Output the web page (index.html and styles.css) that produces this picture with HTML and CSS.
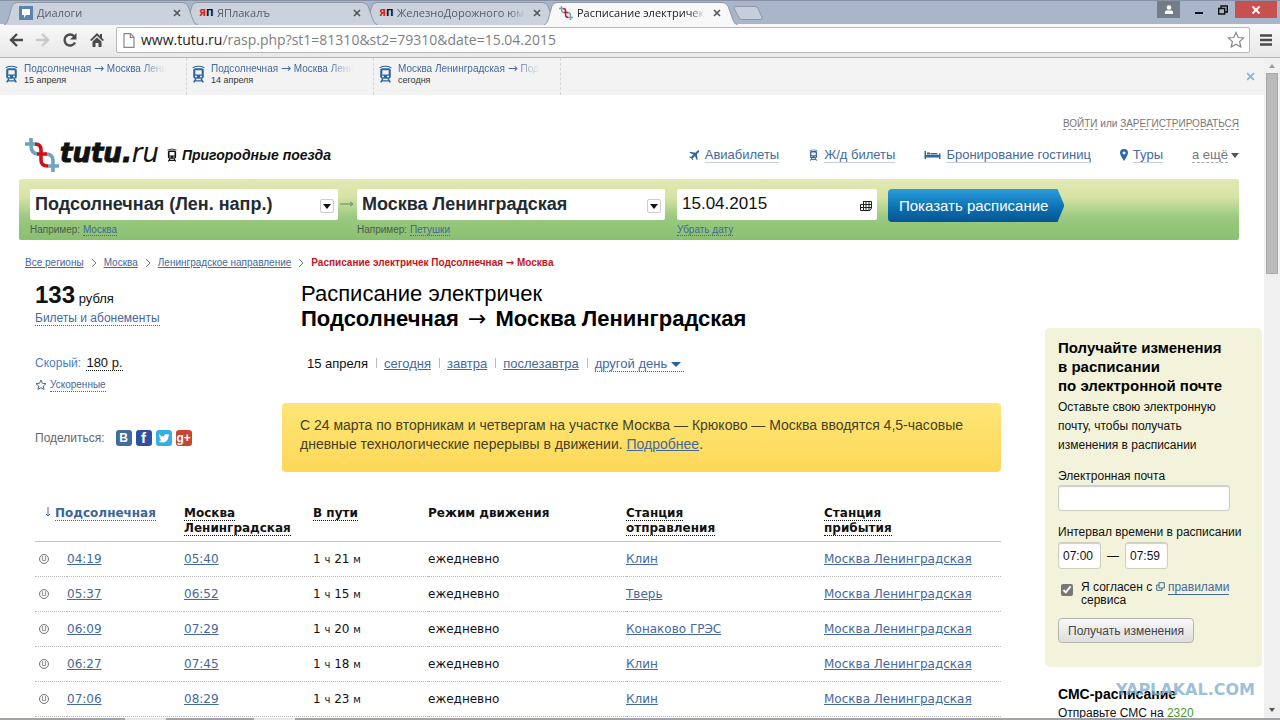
FILE: index.html
```html
<!DOCTYPE html>
<html lang="ru">
<head>
<meta charset="utf-8">
<title>Расписание электричек Подсолнечная → Москва</title>
<link rel="stylesheet" href="styles.css">
</head>
<body>
<svg class="defs" aria-hidden="true">
  <symbol id="train" viewBox="0 0 12 17"><path d="M.5 2.500Q6 0 11.500 2.500" fill="none" stroke="currentColor"/><path d="M3 3h6q2 0 2 2v6q0 2-2 2H3q-2 0-2-2V5q0-2 2-2zm0 2v4h6V5zm-.2 5.200v1.300h1.700v-1.300zm4.700 0v1.300h1.700v-1.300z" fill="currentColor" fill-rule="evenodd"/><path d="M3.500 13 1.500 16.500M8.500 13l2 3.500M2.500 15h7" stroke="currentColor" stroke-width="1.400" fill="none"/></symbol>
  <symbol id="close" viewBox="0 0 8 8"><path d="m1 1 6 6M7 1 1 7" stroke="currentColor" stroke-width="1.600"/></symbol>
  <symbol id="helix" viewBox="0 0 34 34"><g fill="none" stroke-width="3.600"><path d="M0 6h10M6 0v7q0 9 7 9M21 16q7 0 7 7v11M23 28h11" stroke="#6fa3c0"/><path d="M10 6q6 0 6 6v10q0 6 7 6M12 16h10" stroke="#d0101c"/></g></symbol>
  <symbol id="tab" viewBox="0 0 194 24" preserveAspectRatio="none"><path d="M0 24Q3 23 4 19L8 5Q9 1.500 13 1.500H178Q182 1.500 184 5L189 19Q190 23 194 24" stroke="#8e98a8"/></symbol>
  <symbol id="chev" viewBox="0 0 6 10"><path d="m1 1 4 4-4 4" fill="none" stroke="#777"/></symbol>
  <symbol id="warn" viewBox="0 0 12 12"><circle cx="6" cy="6" r="4.500" fill="#f6f6f6" stroke="#777"/><path d="M4.500 3v4.500h3V3" fill="none" stroke="#999"/></symbol>
</svg>
<div class="browser">
  <div class="tabstrip">
    <div class="tab"><svg class="shape"><use href="#tab"/></svg>
      <svg class="fav" viewBox="0 0 14 14"><path fill="#5b82ad" d="M0 0h14v14H0z"/><path fill="#fff" d="M3 3h8v6H7l-2 3V9H3z"/></svg>
      <span class="tab-title">Диалоги</span><button class="tab-close" aria-label="Закрыть"><svg><use href="#close"/></svg></button></div>
    <div class="tab"><svg class="shape"><use href="#tab"/></svg>
      <span class="yap"><b>Я</b>П</span><span class="tab-title">ЯПлакалъ</span><button class="tab-close" aria-label="Закрыть"><svg><use href="#close"/></svg></button></div>
    <div class="tab"><svg class="shape"><use href="#tab"/></svg>
      <span class="yap"><b>Я</b>П</span><span class="tab-title">ЖелезноДорожного юмора</span><button class="tab-close" aria-label="Закрыть"><svg><use href="#close"/></svg></button></div>
    <div class="tab active"><svg class="shape"><use href="#tab"/></svg>
      <svg class="fav"><use href="#helix"/></svg><span class="tab-title">Расписание электричек Подсолнечная</span><button class="tab-close" aria-label="Закрыть"><svg><use href="#close"/></svg></button></div>
    <button class="newtab" aria-label="Новая вкладка"><svg viewBox="0 0 30 14"><path d="M3 .5h19q2 0 3 2l4 9q0 2-2 2H9q-2 0-3-2l-5-9q0-2 2-2z" fill="#c6cedb" stroke="#8e98a8"/></svg></button>
    <div class="window-buttons">
      <button class="user" aria-label="Профиль"><svg viewBox="0 0 10 10"><circle cx="5" cy="2.500" r="2.300" fill="#fff"/><path fill="#fff" d="M1 9V7q0-1.500 1.500-1.500h5Q9 5.500 9 7v2z"/></svg></button>
      <button aria-label="Свернуть"><svg viewBox="0 0 10 10"><path d="M1 8h8" stroke="#111" stroke-width="2"/></svg></button>
      <button aria-label="Восстановить"><svg viewBox="0 0 10 10"><path d="M.7 3.500h6v5.500h-6zM3 3V1h6.300v6H7" fill="none" stroke="#111" stroke-width="1.400"/></svg></button>
      <button class="quit" aria-label="Закрыть окно"><svg viewBox="0 0 10 10"><path d="m1.500 1.500 7 7m0-7-7 7" stroke="#fff" stroke-width="1.800"/></svg></button>
    </div>
  </div>
  <div class="toolbar">
    <button aria-label="Назад"><svg viewBox="0 0 16 16"><path d="M15 8H3m6-6L3 8l6 6" fill="none" stroke="#4a4a4a" stroke-width="2.400"/></svg></button>
    <button aria-label="Вперёд"><svg viewBox="0 0 16 16"><path d="M1 8h12M7 2l6 6-6 6" fill="none" stroke="#c8c8c8" stroke-width="2.400"/></svg></button>
    <button aria-label="Обновить"><svg viewBox="0 0 16 16"><path d="M13 10.500A5.500 5.500 0 1 1 12 4.200" fill="none" stroke="#4a4a4a" stroke-width="2.400"/><path d="M14.500 1v6.500H8z" fill="#4a4a4a"/></svg></button>
    <button aria-label="Домой"><svg viewBox="0 0 16 16"><path d="M8 1 1 8l1.500 1L8 3.800 13.500 9 15 8l-2-2V2h-2v2zM3.500 9.500 8 5.500l4.500 4V15H9.500v-4h-3v4h-3z" fill="#4a4a4a"/></svg></button>
    <div class="omnibox">
      <svg class="doc" viewBox="0 0 12 15"><path d="M1 .7h6.500L11 4.300v10H1zM7.300 1v3.500H11" fill="#fff" stroke="#888" stroke-width="1.200"/></svg>
      <span class="url"><b>www.tutu.ru</b>/rasp.php?st1=81310&amp;st2=79310&amp;date=15.04.2015</span>
      <svg class="star" viewBox="0 0 18 18"><path d="m9 1.500 2.200 5 5.400.5-4 3.600 1.200 5.400L9 13.200 4.200 16l1.200-5.400-4-3.600 5.400-.5z" fill="#fff" stroke="#888" stroke-width="1.200"/></svg>
    </div>
    <button aria-label="Меню"><svg viewBox="0 0 16 16"><path d="M2 3.500h12M2 8h12M2 12.500h12" stroke="#4a4a4a" stroke-width="2.600"/></svg></button>
  </div>

  <div class="view">
    <div class="page">
      <div class="recent">
        <a class="recent-item" href="#"><svg><use href="#train"/></svg><span><span class="route">Подсолнечная <i>→</i> Москва Ленинградская</span><small>15 апреля</small></span></a>
        <a class="recent-item" href="#"><svg><use href="#train"/></svg><span><span class="route">Подсолнечная <i>→</i> Москва Ленинградская</span><small>14 апреля</small></span></a>
        <a class="recent-item" href="#"><svg><use href="#train"/></svg><span><span class="route">Москва Ленинградская <i>→</i> Подсолнечная</span><small>сегодня</small></span></a>
        <button class="recent-close" aria-label="Закрыть"><svg><use href="#close"/></svg></button>
      </div>

      <header>
        <div class="login"><a href="#">ВОЙТИ</a> или <a href="#">ЗАРЕГИСТРИРОВАТЬСЯ</a></div>
        <div class="head-row">
          <a class="logo" href="#"><svg><use href="#helix"/></svg><span><b>tutu.</b>ru</span></a>
          <div class="slogan"><svg><use href="#train"/></svg>Пригородные поезда</div>
          <nav>
            <a href="#"><svg viewBox="0 0 12 12"><path fill="currentColor" d="M11 1q1 1-2.500 4l1 6-1 .5L6.500 7.200 4 9.500l.3 1.700-.8.600-1-2.300L.2 8.500l.6-.8 1.700.2L4.800 5.500.5 3.500 1 2.500l6 1Q10 0 11 1z"/></svg><span>Авиабилеты</span></a>
            <a href="#"><svg><use href="#train"/></svg><span>Ж/д билеты</span></a>
            <a href="#"><svg class="bed" viewBox="0 0 16 10"><path fill="currentColor" d="M0 1h1.500v4h13V3.500H16V9h-1.500V7.500h-13V9H0zM2.500 2.500h3v2h-3zM6 3h6l2 1.500H6z"/></svg><span>Бронирование гостиниц</span></a>
            <a href="#"><svg class="pin" viewBox="0 0 8 12"><path fill="currentColor" fill-rule="evenodd" d="M4 0Q8 .2 8 4 8 6 4 12 0 6 0 4 0 .2 4 0zm0 2.500a1.500 1.500 0 1 0 .1 0z"/></svg><span>Туры</span></a>
            <a class="more" href="#"><span>а ещё</span><i class="caret"></i></a>
          </nav>
        </div>
      </header>

      <form class="search">
        <div class="station"><div class="field"><input type="text" aria-label="Откуда" value="Подсолнечная (Лен. напр.)"><button type="button" aria-label="Список"><i class="caret"></i></button></div><p>Например: <a href="#">Москва</a></p></div>
        <svg class="arrow" viewBox="0 0 14 8"><path d="M0 4h12M10 2l3 2-3 2" fill="none" stroke="#64896a"/></svg>
        <div class="station"><div class="field"><input type="text" aria-label="Куда" value="Москва Ленинградская"><button type="button" aria-label="Список"><i class="caret"></i></button></div><p>Например: <a href="#">Петушки</a></p></div>
        <div class="date"><div class="field"><input type="text" aria-label="Дата" value="15.04.2015"><svg viewBox="0 0 12 10"><path d="M3 .5h8.500v6.500L10 9.500H.5V3.500h11M.5 6.500h11M3.500.5v9M6 .5v9M9 .5v9" fill="none" stroke="#222"/></svg></div><p><a href="#">Убрать дату</a></p></div>
        <button class="submit" type="button">Показать расписание</button>
      </form>

      <div class="crumbs">
        <a href="#">Все регионы</a><svg><use href="#chev"/></svg><a href="#">Москва</a><svg><use href="#chev"/></svg><a href="#">Ленинградское направление</a><svg><use href="#chev"/></svg><strong>Расписание электричек Подсолнечная <i>→</i> Москва</strong>
      </div>

      <div class="columns">
        <main>
          <div class="intro">
            <aside class="price">
              <div class="cost"><b>133</b> рубля</div>
              <a class="dotted" href="#">Билеты и абонементы</a>
              <div class="fast">Скорый: <span>180 р.</span></div>
              <div class="quick"><svg viewBox="0 0 12 12"><path d="m6 1 1.400 3.300 3.600.3-2.700 2.400.8 3.500L6 8.700l-3.100 1.800.8-3.500L1 4.600l3.600-.3z" fill="none" stroke="#3a72ae"/></svg><a class="dotted" href="#">Ускоренные</a></div>
              <div class="share">Поделиться:
                <a class="vk" href="#" aria-label="ВКонтакте">B</a><a class="fb" href="#" aria-label="Facebook">f</a><a class="tw" href="#" aria-label="Twitter"><svg viewBox="0 0 12 12"><path fill="#fff" d="M1 2q2 2.500 5 2.500Q6 2 8 2q1 0 1.500.5L11 2l-.8 1.500L11.500 3 10.500 4.500Q10 10 5 10.500 2 10.500.5 9q2 0 3-1Q2 7.500 1.500 6h1Q1 5 1 4l1 .2Q.5 3 1 2z"/></svg></a><a class="gp" href="#" aria-label="Google+">g+</a>
              </div>
            </aside>
            <section class="title">
              <h1>Расписание электричек<br><b>Подсолнечная <i>→</i> Москва Ленинградская</b></h1>
              <div class="days"><span>15 апреля</span><a href="#">сегодня</a><a href="#">завтра</a><a href="#">послезавтра</a><a class="other" href="#"><span>другой день <i class="caret"></i></span></a></div>
              <div class="alert">С 24 марта по вторникам и четвергам на участке Москва — Крюково — Москва вводятся 4,5-часовые дневные технологические перерывы в движении. <a href="#">Подробнее</a>.</div>
            </section>
          </div>
          <table>
            <colgroup><col class="c-ico"><col class="c-dep"><col class="c-arr"><col class="c-dur"><col class="c-st"><col class="c-st"><col></colgroup>
            <thead><tr><th class="sorted" colspan="2"><svg viewBox="0 0 6 10"><path d="M3 0v9M1 7l2 2 2-2" fill="none" stroke="#3a72ae"/></svg><span>Подсолнечная</span></th><th><span>Москва Ленинградская</span></th><th><span>В пути</span></th><th>Режим движения</th><th><span>Станция<br>отправления</span></th><th><span>Станция<br>прибытия</span></th></tr></thead>
            <tbody>
              <tr><td><svg><use href="#warn"/></svg></td><td><a href="#">04:19</a></td><td><a href="#">05:40</a></td><td>1 <small>ч</small> 21 <small>м</small></td><td>ежедневно</td><td><a href="#">Клин</a></td><td><a href="#">Москва Ленинградская</a></td></tr>
              <tr><td><svg><use href="#warn"/></svg></td><td><a href="#">05:37</a></td><td><a href="#">06:52</a></td><td>1 <small>ч</small> 15 <small>м</small></td><td>ежедневно</td><td><a href="#">Тверь</a></td><td><a href="#">Москва Ленинградская</a></td></tr>
              <tr><td><svg><use href="#warn"/></svg></td><td><a href="#">06:09</a></td><td><a href="#">07:29</a></td><td>1 <small>ч</small> 20 <small>м</small></td><td>ежедневно</td><td><a href="#">Конаково ГРЭС</a></td><td><a href="#">Москва Ленинградская</a></td></tr>
              <tr><td><svg><use href="#warn"/></svg></td><td><a href="#">06:27</a></td><td><a href="#">07:45</a></td><td>1 <small>ч</small> 18 <small>м</small></td><td>ежедневно</td><td><a href="#">Клин</a></td><td><a href="#">Москва Ленинградская</a></td></tr>
              <tr><td><svg><use href="#warn"/></svg></td><td><a href="#">07:06</a></td><td><a href="#">08:29</a></td><td>1 <small>ч</small> 23 <small>м</small></td><td>ежедневно</td><td><a href="#">Клин</a></td><td><a href="#">Москва Ленинградская</a></td></tr>
            </tbody>
          </table>
        </main>
        <div class="side">
          <form class="subscribe">
            <h2>Получайте изменения<br>в расписании<br>по электронной почте</h2>
            <p>Оставьте свою электронную<br>почту, чтобы получать<br>изменения в расписании</p>
            <label for="email">Электронная почта</label>
            <input id="email" class="email" type="text">
            <label for="from">Интервал времени в расписании</label>
            <div class="interval"><input id="from" type="text" value="07:00">—<input type="text" aria-label="До" value="07:59"></div>
            <div class="agree"><input id="agree" type="checkbox" checked><label for="agree">Я согласен с <svg viewBox="0 0 9 9"><path d="M3 .7h5.300V6H3zM3 3H.7v5.300H6V6" fill="none" stroke="#3f6a9c"/></svg> <a href="#">правилами</a> сервиса</label></div>
            <button type="button">Получать изменения</button>
          </form>
          <div class="sms"><h2>СМС-расписание</h2><p>Отправьте СМС на <em>2320</em></p></div>
        </div>
      </div>
      <div class="mark">YAPLAKAL.COM</div>
    </div>
    <div class="scrollbar"><i class="up"></i><div class="thumb"></div><i class="down"></i></div>
  </div>
  <div class="taskbar"><i></i><i></i></div>
</div>
</body>
</html>
```

FILE: styles.css
```css
* { box-sizing: border-box; }
body { margin: 0; font: 12px/16px "Liberation Sans", Arial, sans-serif; color: #111; background: #fff; }
h1, h2, p { margin: 0; font-weight: normal; }
button { margin: 0; padding: 0; border: 0; background: none; font: inherit; color: inherit; }
input { font: inherit; color: inherit; margin: 0; }
a { color: #45699c; }
svg { display: block; flex: none; }
.defs { position: absolute; width: 0; height: 0; }
.caret { display: inline-block; border: 4px solid transparent; border-top: 5px solid currentColor; border-bottom: 0; }

.browser { display: flex; flex-direction: column; height: 100vh; overflow: hidden; }

/* Tabs */
.tabstrip { display: flex; flex: none; height: 24px; padding-left: 9px; background: #a9b6c9; font: 11px/24px "Open Sans", "Noto Sans", sans-serif; border-top: 1px solid #8793a5; }
.tab { position: relative; display: flex; align-items: center; gap: 4px; flex: 0 1 180px; min-width: 0; padding: 0 8px 0 10px; color: #555d68; }
.tab > * { position: relative; }
.tab:nth-child(1) { z-index: 3; }
.tab:nth-child(2) { z-index: 2; }
.tab:nth-child(3) { z-index: 1; }
.tab .shape { position: absolute; left: -5px; top: 0; width: calc(100% + 14px); height: 24px; fill: #cbd2de; }
.tab.active { z-index: 4; color: #222; }
.tab.active .shape { fill: #f8f8f8; }
.fav { width: 14px; height: 14px; }
.yap { display: flex; width: 14px; font: bold 9px/24px "DejaVu Sans", sans-serif; color: #111; }
.yap b { color: #e01b22; }
.tab-title { flex: 1; min-width: 0; overflow: hidden; white-space: nowrap; -webkit-mask-image: linear-gradient(90deg, #000 85%, transparent 97%); mask-image: linear-gradient(90deg, #000 85%, transparent 97%); }
.tab-close { color: #555; }
.tab-close svg { width: 8px; height: 8px; }
.newtab { margin-left: 4px; align-self: center; }
.newtab svg { width: 30px; height: 14px; }
.window-buttons { display: flex; align-items: flex-start; margin-left: auto; padding-right: 3px; }
.window-buttons button { width: 24px; height: 17px; display: grid; place-items: center; }
.window-buttons svg { width: 10px; height: 10px; }
.window-buttons .user { background: #747c89; width: 23px; margin-right: 7px; }
.window-buttons .quit { background: #c75050; width: 42px; }

/* Toolbar */
.toolbar { display: flex; align-items: center; height: 34px; flex: none; padding: 0 6px 1px 8px; gap: 11px; background: linear-gradient(#f9f9f9, #e8e8e8); border-bottom: 1px solid #b5b5b5; }
.toolbar > button svg { width: 16px; height: 16px; }
.omnibox { flex: 1; display: flex; align-items: center; gap: 6px; height: 26px; margin-right: -3px; padding: 0 4px 0 6px; background: #fff; border: 1px solid #b8b8b8; border-radius: 2px; }
.doc { width: 12px; height: 15px; }
.url { flex: 1; font: 14px/22px "Open Sans", "Noto Sans", sans-serif; color: #808080; }
.url b { font-weight: normal; color: #222; }
.star { width: 18px; height: 18px; }

/* Viewport */
.view { flex: 1; display: flex; min-height: 0; }
.page { position: relative; flex: 1; min-width: 0; overflow: hidden; }
.scrollbar { width: 16px; background: #f0f0f0; display: flex; flex-direction: column; align-items: center; padding: 6px 0; }
.scrollbar .up { border: 3px solid transparent; border-bottom: 4px solid #999; border-top: 0; }
.scrollbar .down { margin-top: auto; border: 3px solid transparent; border-top: 4px solid #555; border-bottom: 0; }
.thumb { width: 12px; height: 31%; margin-top: 5px; background: #bababa; border: 1px solid #a8a8a8; }
.taskbar { display: flex; flex: none; gap: 88px; height: 2px; padding-left: 125px; background: #a2a2a8; }
.taskbar i { width: 41px; background: #e8e8ea; }

.recent { display: flex; height: 37px; background: #f3f3f3; }
.recent-item { display: flex; gap: 6px; flex: 0 1 187px; min-width: 0; padding: 4px 20px 0 5px; border-right: 1px dashed #d5d5d5; text-decoration: none; font-size: 10px; line-height: 13px; }
.recent-item svg { width: 13px; height: 18px; margin-top: 3px; color: #2c66a4; }
.recent-item > span { min-width: 0; }
.route { display: block; overflow: hidden; white-space: nowrap; -webkit-mask-image: linear-gradient(90deg, #000 82%, transparent); mask-image: linear-gradient(90deg, #000 82%, transparent); }
.route i, h1 i { font-style: normal; font-family: "DejaVu Sans", sans-serif; font-weight: normal; }
.route i { font-size: 12px; line-height: 12px; }
h1 i { padding: 0 3px; }
.recent small { display: block; font-size: 9px; line-height: 10px; color: #333; }
.recent-close { margin-left: auto; padding-right: 9px; color: #8fb5cf; }
.recent-close svg { width: 9px; height: 9px; }

header { padding: 22px 25px 0; }
.login { text-align: right; font-size: 10px; line-height: 14px; color: #777; }
.login a { color: #777; text-decoration: none; border-bottom: 1px dashed #999; }
.head-row { display: flex; align-items: center; height: 48px; }
.logo { display: flex; align-items: center; gap: 1px; color: #111; text-decoration: none; font: italic 26px/34px "DejaVu Sans", sans-serif; }
.logo svg { width: 34px; height: 34px; }
.logo span { padding-bottom: 4px; }
.logo b { -webkit-text-stroke: 1px #111; }
.slogan { display: flex; align-items: center; gap: 5px; margin-left: 8px; font-weight: bold; font-style: italic; font-size: 14px; white-space: nowrap; }
.slogan svg { width: 10px; height: 14px; }
nav { display: flex; gap: 29px; margin-left: auto; font-size: 13px; white-space: nowrap; }
nav a { display: flex; align-items: center; gap: 5px; text-decoration: none; }
nav a span { border-bottom: 1px solid #c3cfe0; line-height: 15px; }
nav svg { width: 11px; height: 12px; color: #2c66a4; }
nav .bed { width: 17px; height: 10px; }
nav .pin { width: 8px; height: 12px; }
nav .more { color: #777; gap: 3px; }
nav .more span { border-bottom: 1px dashed #aaa; }
nav .caret { color: #555; }

.search { display: flex; margin: 0 25px 0 19px; padding: 10px 11px 0; height: 61px; border-radius: 2px; background: linear-gradient(#e4e8b5, #d6e3a4 30%, #9aca80 62%, #8abf70); }
.field { position: relative; height: 31px; }
.field input { width: 100%; height: 31px; padding: 0 5px 1px; border: 0; border-radius: 2px; background: #fff; font-size: 17px; }
.station { flex: 0 1 308px; }
.station input { font-weight: bold; font-size: 18px; color: #222b30; padding-right: 30px; }
.field button { position: absolute; right: 4px; top: 10px; width: 14px; height: 14px; border: 1px solid #ccc; border-radius: 2px; display: grid; place-items: center; color: #111; }
.field svg { position: absolute; right: 5px; top: 12px; width: 12px; height: 10px; }
.search p { font-size: 10px; line-height: 19px; color: #4b5a4c; }
.search p a { color: #41679a; text-decoration: none; border-bottom: 1px dotted; }
.arrow { width: 14px; height: 8px; margin: 11px 3px 0 2px; }
.date { flex: 0 1 200px; margin-left: 12px; }
.submit { height: 33px; margin-left: 11px; padding: 0 16px 0 11px; color: #fff; font-size: 15px; white-space: nowrap; border-radius: 4px; background: linear-gradient(#2a9ddb, #0a6eb0 60%, #055590); clip-path: polygon(0 0, calc(100% - 7px) 0, 100% 50%, calc(100% - 7px) 100%, 0 100%); }

.crumbs { display: flex; align-items: center; gap: 7px; margin: 15px 25px 0; font-size: 10px; }
.crumbs svg { width: 6px; height: 10px; }
.crumbs strong { color: #c4151c; }
.crumbs i { font-style: normal; font-family: "DejaVu Sans", sans-serif; line-height: 12px; }

.columns { display: flex; padding: 0 2px 0 35px; }
main { flex: 1; min-width: 0; margin-right: 44px; }
.intro { display: grid; grid-template-columns: 247px 1fr; }
.dotted { text-decoration: none; border-bottom: 1px dotted; line-height: 13px; }
.cost { margin-top: 13px; font-size: 13px; line-height: 22px; }
.cost b { font-size: 24px; }
.fast { margin-top: 29px; color: #4b7fc0; line-height: 16px; }
.fast span { margin-left: 2px; font-size: 13px; color: #111; border-bottom: 1px dotted; }
.quick { display: flex; align-items: center; gap: 3px; margin-top: 7px; font-size: 10px; }
.quick svg { width: 12px; height: 12px; }
.share { display: flex; align-items: center; gap: 4px; margin-top: 38px; color: #666; }
.share a { width: 16px; height: 16px; border-radius: 3px; color: #fff; font: bold 12px/16px "Liberation Sans", sans-serif; text-align: center; text-decoration: none; overflow: hidden; }
.share svg { width: 12px; height: 12px; margin: 2px; }
.share .vk { margin-left: 7px; background: #416b9a; }
.share .fb { background: #2f4fa0; font-size: 15px; }
.share .tw { background: #35aee2; }
.share .gp { background: #c74632; }
h1 { margin: 10px 0 0 19px; font-size: 22px; line-height: 25px; color: #000; }
.days { display: flex; margin: 25px 0 0 25px; font-size: 13px; line-height: 16px; white-space: nowrap; }
.days a::before { content: ""; display: inline-block; width: 1px; height: 10px; margin: 0 7px 0 8px; background: #bbb; }
.days a { display: block; }
.days .other { text-decoration: none; }
.other span { border-bottom: 1px dotted; padding-right: 3px; }
.days .caret { color: #2d5f9e; border-width: 5px 5px 0; margin-bottom: 1px; }
.alert { margin-top: 31px; padding: 13px 18px 18px; border-radius: 4px; background: linear-gradient(#fee677, #fdd858); color: #453f25; font-size: 14px; line-height: 19px; }

table { width: 100%; margin-top: 31px; border-collapse: collapse; table-layout: fixed; font: 12px/15px "DejaVu Sans", Verdana, sans-serif; }
.c-ico { width: 32px; }
.c-dep { width: 117px; }
.c-arr { width: 129px; }
.c-dur { width: 115px; }
.c-st { width: 198px; }
th { padding: 3px 0 5px; text-align: left; vertical-align: top; border-bottom: 1px solid #c4c4c4; color: #111; }
th span { border-bottom: 1px dotted #111; }
.sorted { padding-left: 10px; color: #3b6598; }
.sorted svg { display: inline-block; width: 6px; height: 10px; margin-right: 4px; }
.sorted span { border-color: #3b6598; }
td { height: 35px; padding: 0; border-bottom: 1px dotted #bbb; white-space: nowrap; }
td svg { width: 12px; height: 12px; margin-left: 3px; }
td small { font-size: 10px; }

.side { flex: 0 0 217px; margin-top: 57px; }
.side h2 { font-size: 15px; line-height: 19px; font-weight: bold; color: #000; }
.side p { line-height: 19px; }
.subscribe { padding: 10px 13px 24px; border-radius: 5px; background: #f2f3da; }
.subscribe p { margin: 3px 0 13px; }
.subscribe label { white-space: nowrap; display: block; line-height: 16px; }
.subscribe input[type="text"] { border: 1px solid #cfcfc0; border-radius: 3px; background: #fff; box-shadow: inset 0 1px 1px #ccc; }
.subscribe .email { display: block; width: 172px; height: 26px; margin: 1px 0 13px; }
.interval { display: flex; align-items: center; gap: 6px; margin-top: 2px; }
.interval input { width: 43px; height: 27px; padding: 0 4px; }
.agree { display: flex; align-items: flex-start; gap: 8px; margin: 12px 0 11px; padding-left: 3px; }
.agree input { width: 12px; height: 12px; margin-top: 3px; accent-color: #777; }
.subscribe .agree label { line-height: 13px; white-space: normal; }
.agree svg { display: inline-block; width: 9px; height: 9px; }
.agree a { text-decoration: none; border-bottom: 1px solid; }
.subscribe button { height: 25px; padding: 0 9px; border: 1px solid #b5b5ad; border-radius: 4px; background: linear-gradient(#f8f8f8, #dedede); color: #444; }
.sms { padding: 18px 13px 0; white-space: nowrap; }
.sms h2 { font-size: 14px; }
.sms em { font-style: normal; color: #4a9a2c; }
.mark { position: absolute; right: 9px; bottom: 18px; font: bold 16px/20px "DejaVu Sans", sans-serif; color: #7fafcfcc; }
```
